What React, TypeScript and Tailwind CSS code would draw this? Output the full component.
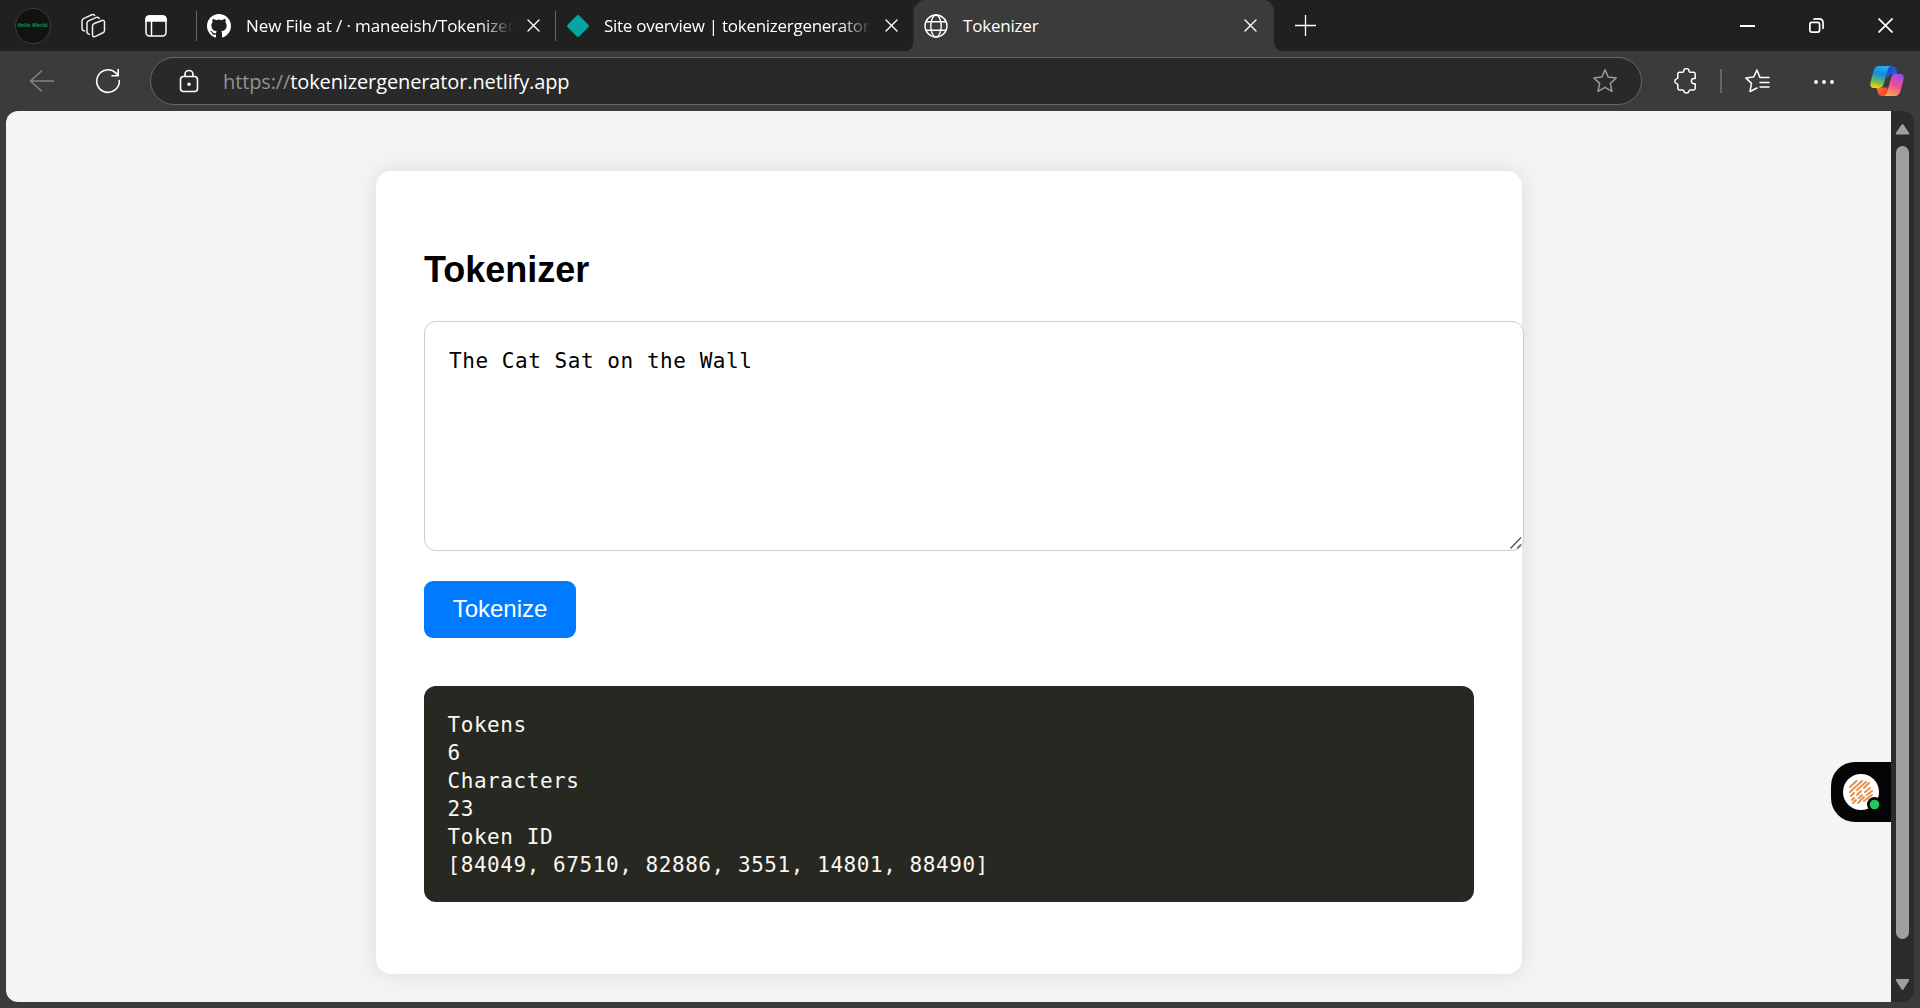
import React from 'react';

function Close({ className = '', size = 13 }: { className?: string; size?: number }) {
  return (
    <svg className={className} width={size} height={size} viewBox="0 0 13 13" fill="none" stroke="#fff" strokeWidth="1.4" strokeLinecap="round">
      <path d="M1 1l11 11M12 1L1 12" />
    </svg>
  );
}

function TabStrip() {
  return (
    <div className="flex h-[51px] items-center bg-[#202020] text-[17px] text-white">
      <div className="ml-[15px] flex h-9 w-9 items-center justify-center rounded-full border border-[#3b3b3b] bg-[#121212]">
        <span className="whitespace-nowrap text-[5.5px] font-bold italic leading-none text-[#08914a]">Hello World.</span>
      </div>
      <svg className="ml-[29px]" width="26" height="26" viewBox="0 0 26 26" fill="none" stroke="#eee" strokeWidth="1.5" strokeLinejoin="round" strokeLinecap="round">
        <path d="M13.700 10.800l8.300-3.300q2.500-.8 2.500 1.700v8.300q0 1.500-1.500 2.200l-7.500 3.700q-3 1-3-1.700v-8.700q0-1.500 1.200-2.200z" />
        <path d="M9.300 21.200Q7 21 7 18.800v-8.700q0-1.500 1.500-2.200l7.800-3.500q2.200-.8 2.900 1" />
        <path d="M4.600 18Q2 17.800 2 15.600V7.800q0-1.500 1.500-2.200l8.300-3.900q2-.8 2.900 .7" />
      </svg>
      <svg className="ml-[38px]" width="24" height="24" viewBox="0 0 24 24" fill="none" stroke="#fff" strokeWidth="1.500">
        <rect x="2" y="2" width="20" height="20" rx="3.500" />
        <path d="M2 7V5.500Q2 2 5.500 2h13Q22 2 22 5.500V7z" fill="#fff" />
        <path d="M7.500 7v15" />
      </svg>
      <div className="ml-[28px] h-[30px] w-px bg-[#666]" />
      <svg className="ml-[10px]" width="24" height="24" viewBox="0 0 16 16" fill="#fff">
        <path d="M8 0C3.580 0 0 3.580 0 8c0 3.540 2.290 6.530 5.470 7.590.4.070.55-.17.55-.38 0-.19-.01-.82-.01-1.490-2.010.370-2.530-.49-2.690-.94-.09-.23-.48-.94-.82-1.130-.28-.15-.68-.52-.01-.53.630-.01 1.080.580 1.230.820.720 1.210 1.870.870 2.330.660.070-.52.280-.87.510-1.070-1.780-.2-3.640-.89-3.640-3.950 0-.87.310-1.590.820-2.150-.08-.2-.36-1.020.080-2.120 0 0 .670-.21 2.200.820.640-.18 1.320-.27 2-.27s1.360.090 2 .27c1.530-1.040 2.200-.82 2.200-.82.440 1.100.160 1.920.080 2.120.510.560.820 1.270.820 2.150 0 3.070-1.870 3.750-3.650 3.950.290.250.540.730.540 1.480 0 1.070-.01 1.930-.01 2.200 0 .210.150.460.550.380A8 8 0 0 0 16 8c0-4.420-3.580-8-8-8z" />
      </svg>
      <div className="ml-[15px] w-[267px] overflow-hidden whitespace-nowrap tracking-[-0.1px] [mask-image:linear-gradient(to_right,black_88%,transparent)]">New File at / · maneeish/Tokenizer</div>
      <Close className="ml-[14px]" />
      <div className="ml-[15px] h-[30px] w-px bg-[#666]" />
      <svg className="ml-[10px]" width="24" height="24" viewBox="0 0 24 24" fill="#05a3a2">
        <rect x="3.800" y="3.800" width="16.400" height="16.400" rx="2" transform="rotate(45 12 12)" />
      </svg>
      <div className="ml-[14px] w-[268px] overflow-hidden whitespace-nowrap tracking-[-0.28px] [mask-image:linear-gradient(to_right,black_88%,transparent)]">Site overview | tokenizergenerator</div>
      <Close className="ml-[13px]" />
      <div className="flex h-full w-[381px] items-center">
        <svg className="shrink-0 self-end" width="16" height="51" viewBox="0 0 16 51" fill="#3b3b3b">
          <path d="M16 0Q15.500 0 15.500 10V41Q15.500 51 5.500 51H16z" />
        </svg>
        <div className="flex h-full w-[360px] shrink-0 items-center rounded-t-[11px] bg-[#3b3b3b]">
          <svg className="ml-[10px]" width="24" height="24" viewBox="0 0 24 24" fill="none" stroke="#fff" strokeWidth="1.400">
            <circle cx="12" cy="12" r="11" />
            <ellipse cx="12" cy="12" rx="5.200" ry="11" />
            <path d="M2 7.700h20M2 16.300h20" />
          </svg>
          <div className="ml-[15px] w-[281px] tracking-[-0.2px]">Tokenizer</div>
          <Close />
        </div>
        <svg className="shrink-0" width="10" height="51" viewBox="0 0 10 51" fill="#3b3b3b">
          <path d="M0 41Q0 51 10 51H0z" />
        </svg>
      </div>
      <svg className="mb-px ml-[16px]" width="21" height="21" viewBox="0 0 21 21" stroke="#fff" strokeWidth="1.300">
        <path d="M10.500 0v21M0 10.500h21" />
      </svg>
      <div className="ml-auto flex items-center pr-[27px]">
        <div className="h-[2px] w-[15px] bg-white" />
        <svg className="ml-[54px]" width="15" height="15" viewBox="0 0 15 15" fill="none" stroke="#fff" strokeWidth="1.700">
          <rect x=".9" y="4.400" width="9.700" height="9.700" rx="2" />
          <path d="M4.300 1.200Q5 .9 6 .9h3.800Q14.100 .9 14.100 5.200V9q0 1.200-.6 1.800" />
        </svg>
        <svg className="ml-[54px]" width="15" height="15" viewBox="0 0 16 16" stroke="#fff" strokeWidth="1.800">
          <path d="M.5 .5l15 15M15.500 .5l-15 15" />
        </svg>
      </div>
    </div>
  );
}

function Copilot() {
  return (
    <svg className="ml-[34px]" width="36" height="32" viewBox="0 0 36 32">
      <defs>
        <linearGradient id="blueGreen" x1=".5" y1="0" x2=".3" y2="1">
          <stop offset="0" stopColor="#22b0f5" />
          <stop offset=".35" stopColor="#168be0" />
          <stop offset=".7" stopColor="#5dbb63" />
          <stop offset="1" stopColor="#ffd000" />
        </linearGradient>
        <linearGradient id="deepBlue" x1="0" y1="0" x2="1" y2="1">
          <stop offset="0" stopColor="#1c3fd0" />
          <stop offset="1" stopColor="#1f7bea" />
        </linearGradient>
        <linearGradient id="pinkPurple" x1=".7" y1="0" x2=".3" y2="1">
          <stop offset="0" stopColor="#9d4cf0" />
          <stop offset=".5" stopColor="#ee5092" />
          <stop offset="1" stopColor="#ffaa55" />
        </linearGradient>
        <linearGradient id="redOrange" x1="0" y1="0" x2="1" y2="1">
          <stop offset="0" stopColor="#ffae3a" />
          <stop offset=".6" stopColor="#f4512f" />
        </linearGradient>
      </defs>
      <path d="M17 1h6q3 0 4 3l1.500 5H24q-3 0-4 3l-2 5z" fill="url(#deepBlue)" />
      <path d="M19 31h-6q-3 0-4-3l-1.500-5H12q3 0 4-3l2-5z" fill="url(#redOrange)" />
      <path d="M10 1h13q-3 0-4 3l-4.500 15.500Q13.500 23 10 23H5q-4.500 0-3.500-5.500L4.500 6Q6 1 10 1z" fill="url(#blueGreen)" />
      <path d="M26 31H14q3 0 4-3l4-15.500Q23 9 26 9h5q4.500 0 3.500 5.500L31.500 26Q30 31 26 31z" fill="url(#pinkPurple)" />
      <path d="M19.500 11.500Q20.500 9 23.500 9L18.500 22.500h-4z" fill="#3b3b3b" />
    </svg>
  );
}

function Toolbar() {
  return (
    <div className="flex h-[60px] items-center bg-[#3b3b3b]">
      <svg className="ml-[29px]" width="26" height="24" viewBox="0 0 26 24" fill="none" stroke="#858585" strokeWidth="1.500" strokeLinecap="round" strokeLinejoin="round">
        <path d="M12.500 2L1.500 12l11 10M2 12h22.500" />
      </svg>
      <svg className="ml-[40px]" width="26" height="26" viewBox="0 0 26 26" fill="none" stroke="#fff" strokeWidth="1.600" strokeLinecap="round" strokeLinejoin="round">
        <path d="M24.300 12.500A11.300 11.300 0 1 1 20.800 4.900L23 7M23.200 1.500V7.800H17" />
      </svg>
      <div className="ml-[29px] flex h-[48px] w-[1492px] items-center rounded-full border border-[#666] bg-[#292929]">
        <svg className="ml-[28px] mb-px" width="20" height="24" viewBox="0 0 20 24" fill="none" stroke="#fff" strokeWidth="1.600">
          <rect x="1.500" y="7.500" width="17" height="15" rx="3" />
          <path d="M6 7.500V5.500a4 4 0 0 1 8 0v2" />
          <circle cx="10" cy="15.200" r="1" fill="#fff" />
        </svg>
        <div className="ml-[24px] mt-[2px] whitespace-nowrap text-[20px] tracking-[-0.12px] text-white">
          <span className="text-[#929292]">https://</span>tokenizergenerator.netlify.app
        </div>
        <svg className="ml-auto mr-[23px]" width="26" height="26" viewBox="0 0 26 26" fill="none" stroke="#9b9b9b" strokeWidth="1.500" strokeLinejoin="round">
          <path d="M13 1.800l3.200 7.300 8 .9-5.900 5.400 1.700 7.900-7-4-7 4 1.700-7.900L1.800 10l8-.9z" />
        </svg>
      </div>
      <svg className="ml-[31px]" width="25" height="26" viewBox="0 0 25 26" fill="none" stroke="#fff" strokeWidth="1.500" strokeLinejoin="round">
        <path d="M6.500 4.300h3.300q.8 0 .9-1a2.700 2.700 0 0 1 5.400 0q.1 1 .9 1h3.500q1.700 0 1.700 1.700v4.500h-1.200a2.600 2.600 0 0 0 0 5.200h1.200v4.600q0 1.700-1.700 1.700h-3.500q-.8 0-.9 1a2.800 2.800 0 0 1-5.400 0q-.1-1-.9-1H6.500q-1.700 0-1.700-1.700V16.700q0-.8-1-.9a2.700 2.700 0 0 1 0-5.200q1-.1 1-.9V6q0-1.700 1.700-1.700z" />
      </svg>
      <div className="ml-[22px] h-6 w-[1.5px] bg-[#666]" />
      <svg className="ml-[22px]" width="26" height="26" viewBox="0 0 26 26" fill="none" stroke="#fff" strokeWidth="1.500" strokeLinejoin="round" strokeLinecap="round">
        <path d="M25 9.600h-9L12.900 2 9.700 9l-7.900.9 5.700 5.500L6 23.500l7-3.500M16 14.500h9M16 19h9" />
      </svg>
      <svg className="ml-[43px] mt-px" width="22" height="6" viewBox="0 0 22 6" fill="#fff">
        <circle cx="3" cy="3" r="1.900" /><circle cx="11" cy="3" r="1.900" /><circle cx="19" cy="3" r="1.900" />
      </svg>
      <Copilot />
    </div>
  );
}

function Card() {
  return (
    <main className="ml-[370px] mt-[60px] h-[803px] w-[1146px] rounded-[15px] bg-white px-12 pt-[78px] shadow-[0_0_22px_rgba(0,0,0,0.1)]">
      <h1 className='font-["Liberation_Sans",Arial,sans-serif] text-[36px] font-bold leading-[42px] text-black'>Tokenizer</h1>
      <div className="relative mt-[30px] h-[230px] w-[1100px]">
        <textarea
          className='block h-full w-full resize-none rounded-[12px] border border-[#ccc] bg-white px-[24px] py-[25px] font-["DejaVu_Sans_Mono",monospace] text-[21px] leading-[28px] tracking-[0.55px] text-black outline-none'
          defaultValue="The Cat Sat on the Wall"
        />
        <svg className="absolute bottom-[2px] right-[2px]" width="12" height="12" viewBox="0 0 12 12" stroke="#555" strokeWidth="1.400">
          <path d="M.5 11.500l10.500-11M7 11.500l4-4" />
        </svg>
      </div>
      <button className='mt-[30px] block h-[57px] w-[152px] rounded-[9px] bg-[#007bff] pb-px font-["Liberation_Sans",Arial,sans-serif] text-[24px] leading-[54px] text-white'>Tokenize</button>
      <pre className='mt-[48px] h-[216px] w-[1050px] rounded-[12px] bg-[#272822] px-[23.5px] pt-[25px] font-["DejaVu_Sans_Mono",monospace] text-[21px] leading-[28px] tracking-[0.56px] text-[#f8f8f2]'>
        {'Tokens\n6\nCharacters\n23\nToken ID\n[84049, 67510, 82886, 3551, 14801, 88490]'}
      </pre>
    </main>
  );
}

function Assistant() {
  return (
    <div className="absolute right-0 top-[651px] h-[60px] w-[60px] rounded-l-[24px] bg-[#050507]">
      <svg width="60" height="60" viewBox="0 0 60 60">
        <circle cx="30" cy="30" r="18" fill="#fff" />
        <g stroke="#e8924f" strokeWidth="2.100" strokeLinecap="round">
          <path d="M19 25l6.500-6M19 30L31 19M20 34l3-3M26 28l9-8M21 38l2-2M26 33l4-4M33 26l5-5M22 41l3-3M28 36l3-3M34 30l5-4M27 41l6-6M36 33l5-4M33 39l8-6" />
        </g>
        <circle cx="43.500" cy="42.500" r="7.500" fill="#050507" />
        <circle cx="43.500" cy="42.500" r="4.800" fill="#22c55e" />
      </svg>
    </div>
  );
}

export default function App() {
  return (
    <div className='flex h-[1008px] w-[1920px] flex-col overflow-hidden bg-[#3b3b3b] font-["Open_Sans","Noto_Sans",sans-serif]'>
      <TabStrip />
      <Toolbar />
      <div className="ml-[6px] flex h-[891px] w-[1908px] overflow-hidden rounded-[12px] bg-[#2b2b2b]">
        <div className="relative w-[1885px] overflow-hidden bg-[#f4f4f4]">
          <Card />
          <Assistant />
        </div>
        <div className="flex w-[23px] flex-col items-center">
          <svg className="mt-[12px]" width="15" height="12" viewBox="0 0 15 12" fill="#9f9f9f" stroke="#9f9f9f" strokeWidth="2" strokeLinejoin="round">
            <path d="M7.500 2l5.800 8.500H1.700z" />
          </svg>
          <div className="mt-[11px] h-[793px] w-[13px] rounded-full bg-[#9f9f9f]" />
          <svg className="mt-[39px]" width="15" height="13" viewBox="0 0 15 13" fill="#9f9f9f" stroke="#9f9f9f" strokeWidth="2" strokeLinejoin="round">
            <path d="M7.500 11L1.700 2h11.600z" />
          </svg>
        </div>
      </div>
    </div>
  );
}
